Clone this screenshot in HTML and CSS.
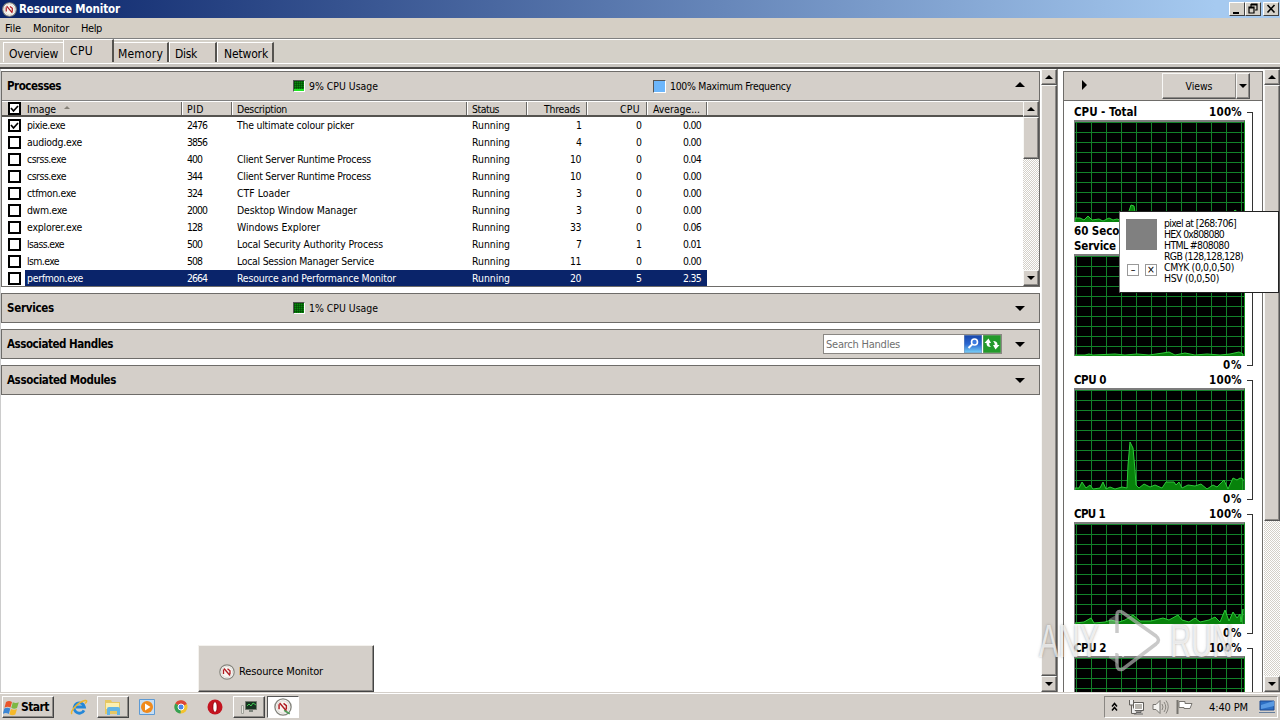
FILE: index.html
```html
<!DOCTYPE html>
<html lang="en">
<head>
<meta charset="utf-8">
<title>Resource Monitor</title>
<link rel="stylesheet" href="styles.css">
</head>
<body>
<svg class="defs" width="0" height="0">
  <symbol id="gauge" viewBox="0 0 16 16">
    <circle cx="8" cy="8" r="7.200" fill="#fff" stroke="#85857d" stroke-width="1.200"/>
    <circle cx="8" cy="8" r="5.600" fill="#f8f5f0" stroke="#c9c6bf" stroke-width=".6"/>
    <path d="M4.500 10V5.500M5 4.500l6 7M8.500 4.800l2.500 2v3.500" fill="none" stroke="#b01c22" stroke-width="1.300"/>
  </symbol>
</svg>
<div class="desktop">
  <header class="titlebar">
    <svg class="title-icon"><use href="#gauge"/></svg>
    <span class="title-text" data-w="101">Resource Monitor</span>
    <div class="winbtns">
      <div class="wbtn"><svg width="14" height="12"><path d="M3 9h6v2H3z"/></svg></div>
      <div class="wbtn"><svg width="14" height="12"><path d="M5 1h6v6H9M5 1v3M5 2h6M3 4h5v6H3zM3 5h5" fill="none" stroke="#000" stroke-width="1.2"/></svg></div>
      <div class="wbtn close"><svg width="14" height="12"><path d="M3.5 2l7 7.5M10.500 2l-7 7.500" stroke="#000" stroke-width="1.6"/></svg></div>
    </div>
  </header>
  <nav class="menubar"><span data-w="16">File</span><span data-w="36">Monitor</span><span data-w="21">Help</span></nav>
  <div class="tabs">
    <div class="tab t1"><span data-w="49">Overview</span></div>
    <div class="tab t2 active"><span data-w="23">CPU</span></div>
    <div class="tab t3"><span data-w="45">Memory</span></div>
    <div class="tab t4"><span data-w="22">Disk</span></div>
    <div class="tab t5"><span data-w="44">Network</span></div>
  </div>
  <main class="content">
    <section class="left">
      <div class="panels">
        <div class="panel first">
          <div class="phead">
            <b data-w="54">Processes</b>
            <i class="swatch green s1"><i class="lvl"></i></i><span class="stat" data-w="69">9% CPU Usage</span>
            <i class="swatch blue"></i><span class="stat" data-w="121">100% Maximum Frequency</span>
            <i class="tri up"></i>
          </div>
          <div class="table">
            <div class="rows">
              <div class="row head">
                <span class="c0"><i class="cb on"><svg width="9" height="9"><path d="M1 4l2.500 3L8 2" fill="none" stroke="#000" stroke-width="1.700"/></svg></i></span>
                <span class="c1"><span data-w="29">Image</span><i class="sort"></i></span><span class="c2"><span data-w="17">PID</span></span><span class="c3"><span data-w="50">Description</span></span><span class="c4"><span data-w="27">Status</span></span><span class="c5"><span data-w="36">Threads</span></span><span class="c6"><span data-w="20">CPU</span></span><span class="c7"><span data-w="47">Average...</span></span>
              </div>
              <div id="procs"></div>
            </div>
            <div class="sb inner"><div class="sbtn"><i class="a up"></i></div><div class="thumb"></div><div class="track"></div><div class="sbtn"><i class="a"></i></div></div>
          </div>
        </div>
        <div class="panel"><div class="phead"><b data-w="47">Services</b><i class="swatch green s2"></i><span class="stat" data-w="69">1% CPU Usage</span><i class="tri"></i></div></div>
        <div class="panel"><div class="phead"><b data-w="106">Associated Handles</b>
          <div class="search"><span data-w="74">Search Handles</span>
            <svg class="sbtn1" width="18" height="18"><defs><linearGradient id="bl" x2="0" y2="1"><stop stop-color="#1745a8"/><stop offset=".5" stop-color="#2a66d0"/><stop offset="1" stop-color="#7ad4f8"/></linearGradient></defs><rect width="18" height="18" fill="url(#bl)" stroke="#7d93b8"/><circle cx="10.500" cy="7" r="3" fill="#3d7be0" stroke="#fff" stroke-width="1.600"/><path d="M8 9.500L4.500 13" stroke="#fff" stroke-width="2"/></svg>
            <svg class="sbtn2" width="18" height="18"><rect width="18" height="18" fill="#239a2b" stroke="#7da07a"/><path d="M1.500 8l4-4.500 2.500 4.500H6.200c0 2 .8 3 1.800 4-3 0-4.500-1-4.500-4zM16.500 10l-4 4.500-2.500-4.500h1.800c0-2-.8-3-1.800-4 3 0 4.500 1 4.500 4z" fill="#fff"/></svg>
          </div><i class="tri"></i></div></div>
        <div class="panel"><div class="phead"><b data-w="109">Associated Modules</b><i class="tri"></i></div></div>
      </div>
      <div class="sb main"><div class="sbtn"><i class="a up"></i></div><div class="thumb"></div><div class="sbtn"><i class="a"></i></div></div>
    </section>
    <section class="right">
      <div class="gpanel">
        <div class="ghead"><i class="play"></i><div class="views"><div class="vlabel"><span data-w="27">Views</span></div><div class="vdrop"><i class="a"></i></div></div></div>
        <div id="graphs" class="graphs"></div>
      </div>
      <div class="sb side"><div class="sbtn"><i class="a up"></i></div><div class="thumb"></div><div class="track"></div><div class="sbtn"><i class="a"></i></div></div>
    </section>
  </main>
  <footer class="taskbar">
    <div class="start"><svg width="17" height="17" viewBox="0 0 17 17"><path d="M3 3q3-2 6 0L7.500 8.500q-3-1.500-6 .2z" fill="#e9552b"/><path d="M9.800 3.300q3 1.500 6 0L14 9q-3 1.500-5.700-.2z" fill="#7db843"/><path d="M1.300 9.500q3-1.600 6 0L5.800 15q-3-2-6 0z" fill="#3c86d4"/><path d="M8 9.900q3 1.500 6 0L12.300 15.500q-3 1.500-6-.2z" fill="#f5b92a"/></svg><b data-w="28">Start</b></div>
    <div class="tb ie"><svg width="18" height="18" viewBox="0 0 18 18"><path d="M14 12.300a5.200 5.200 0 1 1 .4-3.300H6" fill="none" stroke="#2387d8" stroke-width="2.800"/><path d="M2 16C0 14 6 5 15 2.500c2.500-.5 2 1.500 0 3" fill="none" stroke="#eeb62c" stroke-width="1.500"/></svg></div>
    <div class="tb raised fold"><svg width="18" height="18" viewBox="0 0 18 18"><path d="M1 2h6l1 2h8v12H1z" fill="#e6c763"/><path d="M2 5h13v6H2z" fill="#fbefb0"/><path d="M3 17v-6q0-2 2-2h9q2 0 2 2v6h-3v-4H6v4z" fill="#62b4e4"/></svg></div>
    <div class="tb wmp"><svg width="16" height="16"><path d="M.5.5h15v15H.5z" fill="#c6def4" stroke="#5d9ad4"/><circle cx="8" cy="8" r="6" fill="#f08a1c"/><path d="M6 4.500l5.500 3.500L6 11.500z" fill="#fff"/></svg></div>
    <div class="tb chrome"><svg width="14" height="14" viewBox="0 0 14 14"><circle cx="7" cy="7" r="6.500" fill="#f3c32e"/><path d="M7 7L1.300 3.600A6.500 6.500 0 0 1 12.800 4z" fill="#dc4638"/><path d="M7 7L1.300 3.600A6.500 6.500 0 0 0 6.500 13.500z" fill="#35a153"/><circle cx="7" cy="7" r="3" fill="#4a86e8" stroke="#fff"/></svg></div>
    <div class="tb opera"><svg width="16" height="16"><circle cx="8" cy="8" r="7.500" fill="#c41420"/><ellipse cx="8" cy="8" rx="2.600" ry="5" fill="#8e0710"/><ellipse cx="8" cy="8" rx="1.700" ry="4.700" fill="#fff"/></svg></div>
    <div class="tb raised tm"><svg width="18" height="16"><path d="M5.500 2.500h11v8h-11z" fill="#173321" stroke="#74796f"/><path d="M7 7l2-2 2 2 2-3 3 2" fill="none" stroke="#44c954"/><path d="M9 11h4v2H9z" fill="#7c837b"/><path d="M1.500 6.500h2v8h-2z" fill="#e8e8e0" stroke="#a2a29b"/></svg></div>
    <div class="tb pressed"><svg width="18" height="18" viewBox="0 0 16 16"><use href="#gauge"/><path d="M9 11l5 3" stroke="#4b9b55" stroke-width="1.500"/></svg></div>
    <div class="tray">
      <svg class="chev" width="8" height="10"><path d="M1 4.500l2.500-3 2.500 3M1 8.500l2.500-3 2.500 3" fill="none" stroke="#000" stroke-width="1.500"/></svg>
      <svg class="net" width="17" height="16"><path d="M5.500 3.500h10v8h-10z" fill="#b8b5af" stroke="#5f5d5a"/><path d="M6.500 4.500h8v6h-8z" fill="none" stroke="#fff"/><path d="M8 12h5v1.500H6V15h9" fill="none" stroke="#666"/><path d="M1.500 1v5h4V1M3.500 6v8.500h5" fill="#eee" stroke="#66635f"/></svg>
      <svg class="vol" width="17" height="16"><path d="M1 5.500h3l4-4v13l-4-4H1z" fill="#f4f3f0" stroke="#777570"/><path d="M10 5q2 3 0 6M12 3q3.500 5 0 10M14 1.500q4.500 6 0 13" fill="none" stroke="#88857f"/></svg>
      <svg class="flag" width="17" height="16"><path d="M1.500 1v14" stroke="#77746f" stroke-width="2"/><path d="M3 2.500h6v2h7l-2 5H8v-1H3z" fill="#fff" stroke="#77746f"/></svg>
      <span class="clock" data-w="39">4:40 PM</span>
      <svg class="desk" width="16" height="14"><path d="M1 1h14v9H1z" fill="#2d6fc4" stroke="#1f4b90"/><path d="M2 5l13-4v5L2 9z" fill="#5a9ae2"/><path d="M0 12h16v1H0z" fill="#657d9c"/></svg>
    </div>
  </footer>
  <div class="preview"><svg width="16" height="16"><use href="#gauge"/></svg><span data-w="84">Resource Monitor</span></div>
  <div class="picker">
    <div class="pk-left"><div class="pk-color"></div><div class="pk-btns"><i>–</i><i>×</i></div></div>
    <div class="pk-text"><span data-w="72">pixel at [268:706]</span><span data-w="60">HEX 0x808080</span><span data-w="65">HTML #808080</span><span data-w="79">RGB (128,128,128)</span><span data-w="70">CMYK (0,0,0,50)</span><span data-w="55">HSV (0,0,50)</span></div>
  </div>
  <div class="watermark"><span class="wm">ANY</span><svg width="56" height="64" viewBox="0 0 56 64"><path d="M3 10l9-5v50l-9-6z" fill="#fff" fill-opacity=".3"/><path d="M11 24V6q0-5 5-3l34 24q5 4 0 8L17 60q-6 2-6-4V44" fill="none" stroke="#b2b2b2" stroke-opacity=".7" stroke-width="3.500"/><path d="M11 24v20l6-5V19l24 13-24 16-6-4" fill="#fff" fill-opacity=".85"/></svg><span class="wm">RUN</span></div>
</div>
<script src="app.js"></script>
</body>
</html>
```
FILE: styles.css
```css
* { box-sizing: border-box; }
body { margin: 0; background: #fff; font: 10.4px/14px "DejaVu Sans Condensed", "DejaVu Sans", sans-serif; font-stretch: condensed; color: #000; }
i { font-style: normal; display: block; }
svg { display: block; flex: none; }
span, b { white-space: nowrap; }
.defs { position: absolute; }
.desktop { width: 1280px; height: 720px; display: flex; flex-direction: column; overflow: hidden; position: relative; background: #d4d0c8; }
.titlebar { height: 18px; flex: none; display: flex; align-items: center; background: linear-gradient(90deg, #0a246a, #a6caf0 95%); padding: 0 1px 0 2px; }
.title-icon { width: 15px; height: 15px; margin-right: 2px; }
.title-text { color: #fff; font-weight: bold; font-size: 11.5px; }
.winbtns { margin-left: auto; display: flex; }
.wbtn { width: 16px; height: 14px; background: #d4d0c8; border: 1px solid; border-color: #fff #404040 #404040 #fff; }
.wbtn.close { margin-left: 2px; }
.menubar { height: 20px; flex: none; display: flex; gap: 12px; padding: 4px 5px 0; background: #d5cfc5; font-size: 11px; }
.tabs { height: 31px; flex: none; display: flex; align-items: flex-end; border-top: 1px solid #808080; box-shadow: inset 0 1px #fff; padding: 0 0 5px 3px; border-bottom: 2px solid #484644; background: linear-gradient(#0000 24px, #fff 24px, #fff 25px, #c9c5bf 25px); font-size: 12px; }
.tab { height: 20px; padding: 4px 0 0 5px; border: 1px solid #fff; border-right: 2px solid #55534f; border-bottom: 0; background: #d5cfc8; }
.t1 { width: 60px; border-right: 0; }
.t2 { width: 51px; height: 23px; padding-left: 6px; }
.t3 { width: 55px; padding-left: 4px; border-left: 0; }
.t4 { width: 48px; }
.t5 { width: 57px; padding-left: 6px; }
.content { height: 623px; flex: none; display: flex; background: #fff; }
.left { width: 1057px; display: flex; gap: 1px; border-left: 1px solid #ccc; }
.panels { width: 1039px; flex: none; display: flex; flex-direction: column; gap: 6px; padding-top: 2px; }
.panel { border: 1px solid #6e6c69; background: #d4cfc9; height: 30px; flex: none; }
.panel.first { height: 216px; }
.phead { height: 28px; display: flex; align-items: center; padding: 0 14px 0 5px; }
.phead b { font-size: 11.5px; padding-bottom: 1px; }
.swatch { width: 12px; height: 12px; border: 1px solid #555; border-color: #555 #fff #fff #555; flex: none; }
.green { background-color: #0b8a10; background-image: repeating-linear-gradient(90deg, rgba(0,60,0,.5) 0 1px, #0000 1px 2px), repeating-linear-gradient(rgba(0,60,0,.5) 0 1px, #0000 1px 2px); }
.lvl { height: 2px; margin-top: 8px; background: #1fe423; }
.s1 { margin-left: 232px; }
.s2 { margin-left: 239px; }
.blue { background: #6cb6fb; width: 13px; height: 13px; margin-left: 275px; }
.stat { margin-left: 4px; }
.tri { margin-left: auto; border: 5px solid #0000; border-bottom: 0; border-top: 5px solid #000; width: 0; }
.tri.up { border-top: 0; border-bottom: 5px solid #000; margin-bottom: 4px; }
.table { display: flex; height: 186px; background: #fff; border-top: 1px solid #808080; overflow: hidden; }
.rows { width: 1021px; }
.row { display: flex; height: 17px; width: 705px; align-items: center; }
.row > span { height: 17px; padding-top: 1px; flex: none; }
.row > .c0 { padding-top: 2px; }
.c0 { width: 24px; padding-left: 6px; }
.c1 { width: 156px; }
.c2, .c3 { padding-left: 5px; }
.c2 { width: 50px; }
.c3 { width: 235px; }
.c4 { width: 60px; padding-left: 5px; }
.c5, .c6, .c7 { width: 60px; text-align: right; padding-right: 6px; }
.c0 + .c1 { padding-left: 1px; }
.head { height: 16px; width: 1021px; background: #d4cfc9; border-top: 1px solid #fff; border-bottom: 2px solid #55534f; }
.row.head > span { height: 13px; padding-top: 0; border-right: 1px solid #6a6865; box-shadow: 1px 0 #fff; line-height: 15px; }
.row.head > .c0 { border: 0; box-shadow: none; }
.head .c1 { display: flex; gap: 8px; }
.sort { border: 3px solid #0000; border-top: 0; border-bottom: 3px solid #858178; height: 0; margin-top: 4px; }
.cb { width: 13px; height: 13px; border: 2px solid #000; background: #fff; }
.sel { color: #fff; background: linear-gradient(90deg, #fff 23px, #0a246a 23px); }
.sb { display: flex; flex-direction: column; flex: none; width: 16px; }
.sbtn, .thumb, .vlabel, .vdrop { background: #d4cfc9; border: 1px solid; border-color: #f8f8f6 #555 #555 #f8f8f6; box-shadow: inset -1px -1px #8d8a86; }
.sbtn { height: 16px; flex: none; display: flex; align-items: center; justify-content: center; }
.a { border: 4px solid #0000; border-bottom: 0; border-top: 4px solid #000; width: 0; }
.a.up { border-top: 0; border-bottom: 4px solid #000; }
.track { flex: 1; background: repeating-conic-gradient(#d4d0c8 0 25%, #fff 0 50%) 0 0 / 2px 2px; }
.main .thumb { flex: 1; }
.inner .thumb { height: 42px; }
.side .thumb { height: 436px; }
.search { margin-left: 710px; width: 179px; height: 20px; background: #fff; border: 1px solid #8a8783; display: flex; color: #6f6f6f; padding: 0 0 0 2px; font-size: 11px; line-height: 19px; flex: none; }
.search span { width: 138px; flex: none; }
.sbtn2 { margin-left: 1px; }
.right { width: 223px; padding-left: 5px; display: flex; border-left: 1px solid #8a8884; }
.gpanel { width: 200px; margin-top: 2px; border: 1px solid #6e6c69; border-bottom: 0; overflow: hidden; flex: none; }
.ghead { height: 29px; background: #d4cfc9; border-bottom: 1px solid #6e6c69; display: flex; align-items: center; padding: 0 12px 0 18px; }
.play { border: 5px solid #0000; border-right: 0; border-left: 5px solid #000; margin-bottom: 3px; }
.views { margin-left: auto; display: flex; height: 26px; width: 88px; }
.vlabel { width: 74px; display: flex; align-items: center; justify-content: center; border-right-color: #8d8a86; box-shadow: inset 0 -1px #8d8a86; }
.vdrop { width: 14px; display: flex; align-items: center; justify-content: center; }
.side { margin-left: 1px; }
.graphs { padding: 4px 9px 0 10px; }
.gr { display: flex; height: 134px; }
.gr:last-child { height: 88px; overflow: hidden; }
.gmain { width: 171px; font-weight: bold; font-size: 11.5px; }
.glabel { display: flex; justify-content: space-between; height: 15px; line-height: 15px; padding-right: 3px; }
.glabel.gfoot { height: 17px; line-height: 19px; }
.plot { height: 102px; border: 1px solid #7c7c7c; border-top-width: 2px; border-right: 1px solid #159222; border-bottom: 0; background-color: #000; background-image: linear-gradient(90deg, #128129 1px, #0000 1px), linear-gradient(#128129 1px, #0000 1px); background-size: 15px 100%, 100% 10px; background-position: 2px 0, 0 12px; background-origin: border-box; }
.plot svg polygon { fill: #07820b; stroke: #2fc83a; stroke-width: 1; }
.brk { width: 6px; margin: 7px 0 7px 2px; border: 1px solid #333; border-left: 0; }
.gr:first-child .brk { border-bottom: 0; }
.gr:last-child .brk { border-bottom: 0; margin-bottom: 0; }
.taskbar { height: 28px; flex: none; background: #d4cfc9; display: flex; padding: 3px 2px 1px; box-shadow: inset 0 1px #d4cfc9, inset 0 2px #fff; align-items: center; }
.start { width: 52px; height: 22px; display: flex; align-items: center; border: 1px solid; border-color: #fff #444 #444 #fff; box-shadow: inset -1px -1px #8d8a86; padding-left: 0; gap: 1px; }
.start b { font-size: 12px; }
.tb { display: flex; align-items: center; justify-content: center; width: 32px; height: 22px; margin: 0 1px; flex: none; }
.ie { margin-left: 9px; }
.wmp { margin-left: 1px; }
.raised { border: 1px solid; border-color: #fff #444 #444 #fff; box-shadow: inset -1px -1px #8d8a86; }
.pressed { border: 1px solid; border-color: #555 #fff #fff #555; background: #fff; }
.tray { margin-left: auto; width: 174px; height: 22px; border: 1px solid; border-color: #8a8783 #fff #fff #8a8783; display: flex; align-items: center; padding-left: 6px; }
.net { margin-left: 9px; }
.vol { margin-left: 7px; }
.flag { margin-left: 7px; }
.clock { margin-left: 16px; padding-top: 1px; font-size: 11px; flex: none; }
.desk { margin-left: 11px; }
.preview { position: absolute; left: 198px; top: 645px; width: 176px; height: 47px; background: #d4cfc9; border: 1px solid; border-color: #f4f2ee #444 #444 #f4f2ee; box-shadow: inset -1px -1px #8d8a86; display: flex; align-items: center; gap: 4px; padding: 6px 0 0 20px; font-size: 11px; }
.picker { position: absolute; left: 1119px; top: 211px; width: 160px; height: 82px; border: 1px solid #222; border-left-color: #777; background: #fff; display: flex; gap: 7px; padding: 6px; }
.pk-left { width: 31px; }
.pk-color { width: 31px; height: 31px; background: #808080; margin-top: 1px; }
.pk-btns { display: flex; gap: 6px; margin: 14px 0 0 1px; }
.pk-btns i { width: 12px; height: 12px; border: 1px solid #999; line-height: 9px; text-align: center; flex: none; }
.pk-text { display: flex; flex-direction: column; line-height: 11px; }
.watermark { position: absolute; left: 1039px; top: 609px; width: 200px; height: 64px; display: flex; align-items: center; }
.watermark svg { margin: 0 8px 0 3px; }
.watermark .wm { width: 64px; flex: none; font: 47px/60px "Liberation Sans", sans-serif; color: rgba(255,255,255,.72); text-shadow: 0 0 3px rgba(90,90,90,.5); transform: scaleX(.62); transform-origin: 0 50%; }
```
FILE: app.js
```js
const procs = [
  ["pixie.exe", 38, 2476, "The ultimate colour picker", 117, 1, 0, "0.00"],
  ["audiodg.exe", 55, 3856, "", 0, 4, 0, "0.00"],
  ["csrss.exe", 39, 400, "Client Server Runtime Process", 134, 10, 0, "0.04"],
  ["csrss.exe", 39, 344, "Client Server Runtime Process", 134, 10, 0, "0.00"],
  ["ctfmon.exe", 49, 324, "CTF Loader", 53, 3, 0, "0.00"],
  ["dwm.exe", 40, 2000, "Desktop Window Manager", 120, 3, 0, "0.00"],
  ["explorer.exe", 55, 128, "Windows Explorer", 83, 33, 0, "0.06"],
  ["lsass.exe", 37, 500, "Local Security Authority Process", 146, 7, 1, "0.01"],
  ["lsm.exe", 32, 508, "Local Session Manager Service", 137, 11, 0, "0.00"],
  ["perfmon.exe", 56, 2664, "Resource and Performance Monitor", 159, 20, 5, "2.35"]
];
const check = '<svg width="9" height="9"><path d="M1 4l2.500 3L8 2" fill="none" stroke="#000" stroke-width="1.700"/></svg>';
const fitted = (text, w) => `<span data-w="${w}">${text}</span>`;
document.getElementById("procs").innerHTML = procs.map((p, i) =>
  `<div class="row${i === 9 ? " sel" : ""}"><span class="c0"><i class="cb">${i ? "" : check}</i></span><span class="c1">${fitted(p[0], p[1])}</span><span class="c2">${fitted(p[2], p[2] > 999 ? 20 : 15)}</span><span class="c3">${p[3] ? fitted(p[3], p[4]) : ""}</span><span class="c4">${fitted("Running", 38)}</span><span class="c5">${fitted(p[5], p[5] > 9 ? 11 : 5)}</span><span class="c6">${fitted(p[6], 5)}</span><span class="c7">${fitted(p[7], 18)}</span></div>`).join("");

const graphs = [
  ["CPU - Total", 63, "60 Seconds", "", "0,96 5,96 9,98 13,94 17,98 24,97 28,99 34,96 38,98 42,97 48,99 52,96 54,89 56,83 59,84 61,96 65,98 80,96 95,97 110,94 125,97 140,95 155,94 160,88 165,92 168,95"],
  ["Service CPU Usage", 107, "", "0%", "0,99 10,99 14,98 18,99 40,98 50,99 62,98 74,99 88,97 94,96 100,99 110,97 120,99 132,98 145,99 155,98 164,96 168,98"],
  ["CPU 0", 32, "", "0%", "0,98 4,98 7,92 11,98 15,95 18,99 25,98 28,92 31,99 35,97 40,99 47,97 52,98 53,75 55,52 58,58 60,80 61,95 64,98 69,94 75,97 80,95 87,98 91,92 99,92 101,95 104,92 107,98 113,95 120,96 126,94 132,99 138,95 142,97 149,90 153,99 158,88 162,90 165,88 168,89"],
  ["CPU 1", 31, "", "0%", "0,99 9,98 16,94 19,99 30,98 36,96 44,98 50,96 58,91 65,97 76,97 88,94 94,96 103,91 107,96 114,98 120,94 125,98 134,96 140,93 145,98 150,86 154,97 158,88 162,94 165,90 166,98 168,85"],
  ["CPU 2", 32, "", "", "0,110 168,110"]
];
document.getElementById("graphs").innerHTML = graphs.map(g =>
  `<div class="gr"><div class="gmain"><div class="glabel">${fitted(g[0], g[1])}${g[0][0] === "S" ? "" : fitted("100%", 33)}</div><div class="plot"><svg width="169" height="100"><polygon points="0,101 ${g[4]} 168,101"/></svg></div><div class="glabel gfoot">${g[2] ? fitted(g[2], 66) : "<span></span>"}${g[3] ? fitted(g[3], 19) : ""}</div></div><div class="brk"></div></div>`).join("");

// Tune tracking so each label occupies its designed width.
document.querySelectorAll("[data-w]").forEach(el => {
  const r = document.createRange();
  r.selectNodeContents(el);
  const n = el.textContent.length, now = r.getBoundingClientRect().width;
  el.style.letterSpacing = (el.dataset.w - now) / n + "px";
});
```
